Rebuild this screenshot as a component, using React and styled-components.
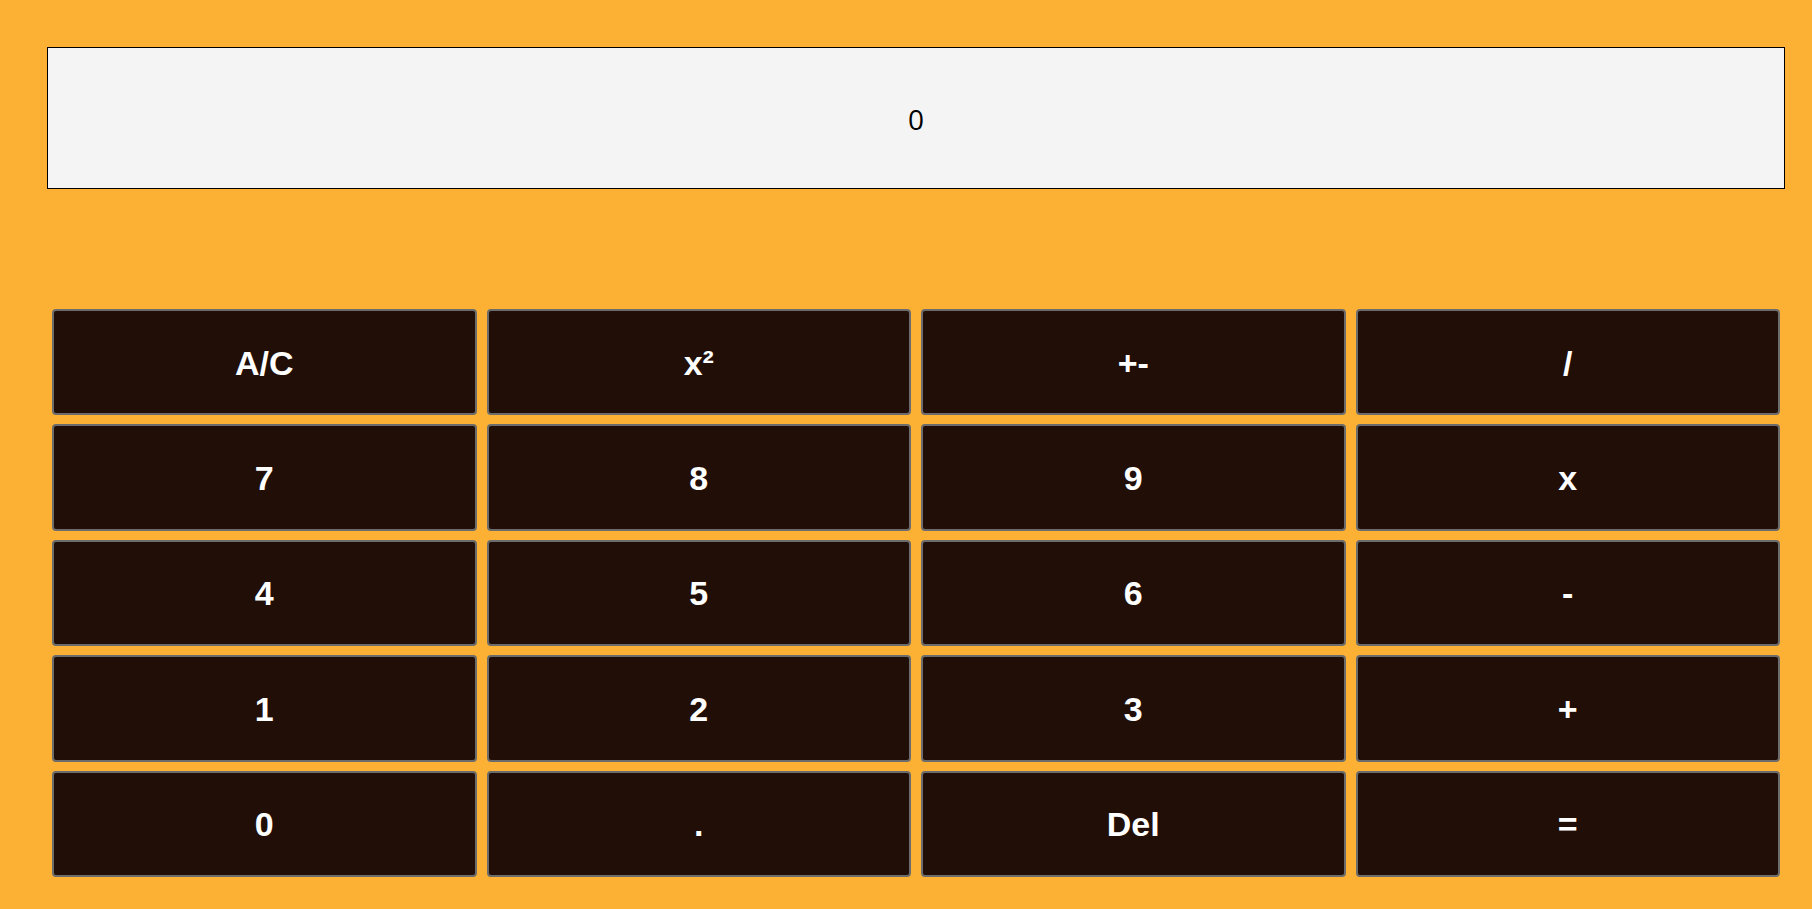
import React, { useState } from 'react'
import styled, { createGlobalStyle } from 'styled-components'

const GlobalStyle = createGlobalStyle`
    html, body {
        margin: 0;
        padding: 0;
        background-color: #fcb034;
        min-height: 100%;
    }
`

const Calculator = styled.div`
    box-sizing: border-box;
    width: 100%;
    min-height: 909px;
    padding: 47px 27px 0 47px;
    background-color: #fcb034;
`

const Display = styled.div`
    box-sizing: border-box;
    width: 100%;
    height: 142px;
    border: 1px solid #000;
    background-color: #f4f4f4;
    display: flex;
    align-items: center;
    justify-content: center;
    font-family: "Open Sans", "Noto Sans", sans-serif;
    font-size: 28px;
    color: #000;
    padding-top: 2px;
`

const Keypad = styled.div`
    display: grid;
    grid-template-columns: repeat(4, 1fr);
    grid-auto-rows: 106.4px;
    column-gap: 10px;
    row-gap: 9px;
    margin: 120px 5px 0 5px;
`

const Key = styled.button`
    box-sizing: border-box;
    margin: 0;
    padding: 2px 0 0;
    border: 2px solid #6c6c6c;
    border-radius: 4px;
    background-color: #210e07;
    color: #fff;
    font-family: "Liberation Sans", Arial, sans-serif;
    font-weight: 700;
    font-size: 34px;
    cursor: pointer;
`

const keys = [
    'A/C', 'x²', '+-', '/',
    '7', '8', '9', 'x',
    '4', '5', '6', '-',
    '1', '2', '3', '+',
    '0', '.', 'Del', '=',
]

export default function App() {
    const [value, setValue] = useState('0')

    const handleKey = (key) => {
        if (key === 'A/C') setValue('0')
    }

    return (
        <>
            <GlobalStyle />
            <Calculator>
                <Display>{value}</Display>
                <Keypad>
                    {keys.map(key => (
                        <Key key={key} onClick={() => handleKey(key)}>{key}</Key>
                    ))}
                </Keypad>
            </Calculator>
        </>
    )
}
